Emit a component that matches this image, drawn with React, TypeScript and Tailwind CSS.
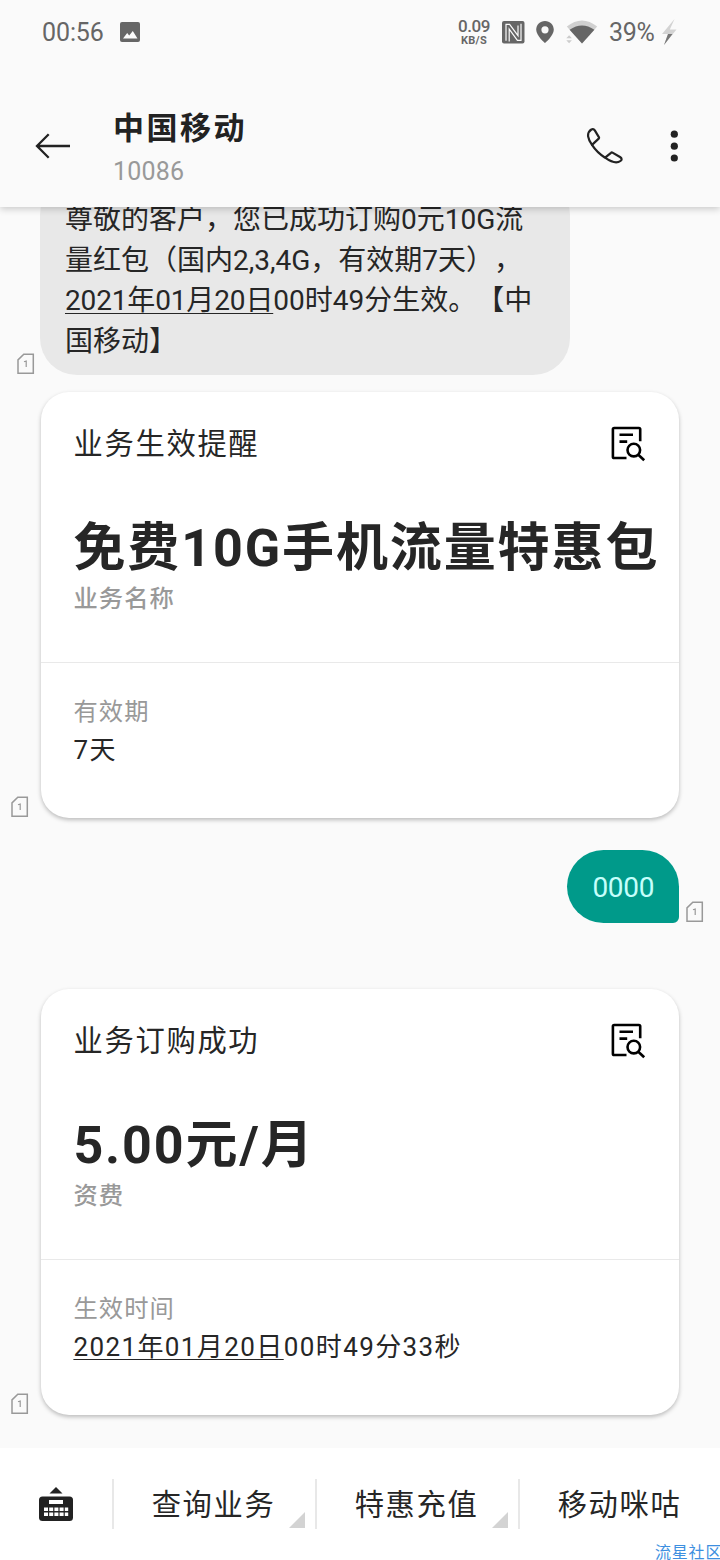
import type { ReactNode } from "react";

function SimIcon() {
  return (
    <svg width="18" height="22" viewBox="0 0 18 22" className="shrink-0" fill="none">
      <path d="M6.8 1.2H16.3V20.2H1V6.9Z" stroke="#999" strokeWidth="1.5" />
      <path d="M7 8.8L9.2 8V14" stroke="#999" strokeWidth="1.2" />
    </svg>
  );
}

function DetailIcon() {
  return (
    <svg width="36" height="36" viewBox="0 0 36 36" fill="none" stroke="#000" strokeWidth="2.6" className="shrink-0">
      <path d="M30.2 15.2V3.3Q30.2 2 28.9 2H4.2Q2.9 2 2.9 3.3V30.7Q2.9 32 4.2 32H16.5" />
      <path d="M9.5 8.8H23M9.5 15.6H17.2" />
      <circle cx="23.8" cy="24.1" r="6.3" />
      <path d="M28.3 28.7L34.2 34.3" />
    </svg>
  );
}

function StatusBar() {
  return (
    <div className="flex h-16 items-center pl-[42px] pr-[43px] text-[#666]">
      <span className="w-[78px] pt-px text-[25px] leading-8 tracking-[-0.1px]">00:56</span>
      <svg width="20" height="20" viewBox="0 0 20 20">
        <rect width="20" height="20" rx="2" fill="#666" />
        <path d="M3 16.5L7.2 11L9.2 13.5L12.8 9L17.5 16.5Z" fill="#fafafa" />
      </svg>
      <div className="ml-auto flex w-[32px] flex-col items-center pb-px">
        <span className="text-[17px] font-medium leading-[17px] tracking-[-0.4px]">0.09</span>
        <span className="text-[11px] font-bold leading-[11px] tracking-[0.3px]">KB/S</span>
      </div>
      <svg width="23" height="23" viewBox="0 0 23 23" className="ml-[12px]">
        <rect width="22.5" height="22.5" rx="2" fill="#666" />
        <path d="M4 19.8V3.4L7.6 3.4L16 14.6V4.4" fill="none" stroke="#fafafa" strokeWidth="1.2" />
        <path d="M19 2.8V19.4L15.4 19.4L7.2 8.2V20.4" fill="none" stroke="#fafafa" strokeWidth="1.2" />
      </svg>
      <svg width="18" height="22" viewBox="0 0 18 22" className="ml-[11px]">
        <path fillRule="evenodd" d="M9 0C4 0 .2 3.9.2 8.7C.2 14.7 9 22 9 22S17.8 14.7 17.8 8.7C17.8 3.9 14 0 9 0ZM9 5.2a3.6 3.6 0 1 1 0 7.2a3.6 3.6 0 0 1 0-7.2Z" fill="#666" />
      </svg>
      <svg width="32" height="24" viewBox="0 0 32 24" className="ml-[12px]">
        <path d="M.8 6.5Q16 -5.5 31.2 6.5L16 23.5Z" fill="#d0d0d0" />
        <path d="M3.6 9.8Q16 1 28.4 9.8L16 23.5Z" fill="#666" />
        <path d="M0 14L7 14L7 24H0Z" fill="#fafafa" />
        <path d="M.3 18.2L3.1 15.2L5.9 18.2ZM.3 20.2H5.9L3.1 23.2Z" fill="#ccc" />
      </svg>
      <span className="ml-[11px] w-[46px] pt-px text-[25px] leading-8 tracking-[-0.3px]">39%</span>
      <svg width="16" height="26" viewBox="0 0 16 26" className="ml-[6px]">
        <path d="M13.5 0L1 15H7L3 26L15.5 10.5H8.8Z" fill="#d3d3d3" />
        <path d="M1 15H11.5L3 26L7 15Z" fill="#777" />
      </svg>
    </div>
  );
}

function Header() {
  return (
    <header className="relative z-10 h-[207px] shrink-0 bg-[#fafafa] shadow-[0_2px_7px_rgba(0,0,0,0.2)]">
      <StatusBar />
      <div className="flex h-[143px] pl-[35px] pr-[42px] text-[#222]">
        <svg width="35" height="26" viewBox="0 0 35 26" className="mt-[69px]" fill="none" stroke="#222" strokeWidth="2.3">
          <path d="M35 13H2M13.7 1.3L2 13L13.7 24.7" />
        </svg>
        <div className="ml-[43px] mt-[45px]">
          <h1 className="text-[31px] font-bold leading-10 tracking-[2.5px]">中国移动</h1>
          <p className="mt-[7px] text-[25px] leading-8 tracking-[0.2px] text-[#999]">10086</p>
        </div>
        <svg width="38" height="37" viewBox="0 0 38 37" className="ml-auto mr-px mt-[64px]" fill="none" stroke="#222" strokeWidth="2.2" strokeLinejoin="round">
          <path d="M6.4 1.5C7.6.9 9 1.2 9.8 2.4L14 9.4C14.2 9.9 14.1 10.2 13.7 10.6L7 16.9C3.3 11.7.7 5.1 6.4 1.5Z" />
          <path d="M7 16.9C10 21.5 15 26.5 20.1 29.7L26 24.8C26.4 24.4 27 24.3 27.5 24.6L35 29Q38 31 35.4 33C30.8 36.5 25 33.2 20.1 29.7" />
        </svg>
        <svg width="8" height="32" viewBox="0 0 8 32" className="ml-[46px] mt-[66px]" fill="#222">
          <circle cx="4.3" cy="4.2" r="3.6" />
          <circle cx="4.3" cy="16.2" r="3.6" />
          <circle cx="4.3" cy="28" r="3.6" />
        </svg>
      </div>
    </header>
  );
}

type CardProps = { title: string; headline: string; caption: string; label: string; children: ReactNode };

function Card({ title, headline, caption, label, children }: CardProps) {
  return (
    <div className="flex items-end pl-[11px]">
      <div className="mr-[12.4px]">
        <SimIcon />
      </div>
      <article className="h-[426px] w-[637.5px] rounded-[28px] bg-white shadow-[0_2px_4px_rgba(0,0,0,0.25)]">
        <div className="h-[271px] border-b border-[#e9e9e9] pl-8 text-[#262626]">
          <div className="flex items-start justify-between pr-[33px] pt-[34px]">
            <h2 className="text-[29.3px] leading-9 tracking-[1.7px]">{title}</h2>
            <DetailIcon />
          </div>
          <p className="mt-[55px] whitespace-nowrap text-[52px] font-bold leading-[64px] tracking-[1.9px]">{headline}</p>
          <p className="mt-[2px] text-[24.3px] font-medium leading-8 tracking-[1.1px] text-[#999]">{caption}</p>
        </div>
        <div className="pl-8 pt-[33px] text-[#262626]">
          <p className="text-[24.3px] leading-8 tracking-[1.1px] text-[#999]">{label}</p>
          <p className="mt-[6px] text-[26px] leading-8 tracking-[1.4px]">{children}</p>
        </div>
      </article>
    </div>
  );
}

function MenuItem({ text, arrow, divider }: { text: string; arrow?: boolean; divider?: boolean }) {
  return (
    <>
      <div className="relative flex w-[201px] shrink-0 items-center justify-center pr-[2px] pt-[4px] text-[29.3px] tracking-[1.6px]">
        {text}
        {arrow && (
          <svg width="16" height="16" viewBox="0 0 16 16" className="absolute bottom-px right-[10px]">
            <path d="M16 0V16H0Z" fill="#d3d3d3" />
          </svg>
        )}
      </div>
      {divider && <div className="w-[2px] shrink-0 bg-[#e8e8e8]" />}
    </>
  );
}

const dateClass = "underline decoration-[1px] underline-offset-[3px] [text-decoration-skip-ink:none]";

export default function App() {
  return (
    <div className="flex h-[1560px] w-[720px] flex-col overflow-hidden bg-[#fafafa] font-['Roboto','Noto_Sans_CJK_SC',sans-serif] [text-spacing-trim:space-all]" lang="zh-CN">
      <Header />
      <main className="flex min-h-0 flex-1 flex-col">
        <div className="-mt-[29px] flex items-end pl-[17px]">
          <div className="mr-[5.4px]">
            <SimIcon />
          </div>
          <div className="h-[197px] w-[530px] whitespace-nowrap rounded-[37px] bg-[#e8e8e8] pl-[24.6px] pt-[22px] text-[28px] leading-[40.5px] text-[#262626]">
            尊敬的客户，您已成功订购0元10G流
            <br />
            量红包（国内2,3,4G，有效期7天），
            <br />
            <span className={`${dateClass} tracking-[-0.15px]`}>2021年01月20日</span>00时49分生效。【中
            <br />
            国移动】
          </div>
        </div>
        <div className="mt-[17px]">
          <Card title="业务生效提醒" headline="免费10G手机流量特惠包" caption="业务名称" label="有效期">
            7天
          </Card>
        </div>
        <div className="mt-[32px] flex items-end justify-end pr-[16.5px]">
          <div className="flex h-[73px] w-[112px] items-center justify-center rounded-[37px] rounded-br-[6px] bg-[#009a8a] pt-[2px] text-[28px] tracking-[-0.3px] text-[#c5fffb]">
            0000
          </div>
          <div className="ml-[6.2px]">
            <SimIcon />
          </div>
        </div>
        <div className="mt-[65.5px]">
          <Card title="业务订购成功" headline="5.00元/月" caption="资费" label="生效时间">
            <span className={dateClass}>2021年01月20日</span>00时49分33秒
          </Card>
        </div>
      </main>
      <footer className="relative flex h-28 shrink-0 bg-white pb-[31px] pt-[31px] text-[#262626]">
        <div className="flex w-28 shrink-0 items-center justify-center">
          <svg width="34" height="34" viewBox="0 0 34 34" fill="#222">
            <path d="M17 0L23.5 6.5H10.5Z" />
            <rect y="9.5" width="34" height="24.5" rx="3.5" />
            <path d="M10 13H24V17H10ZM5 20.5h4v3.6h-4zM10.2 20.5h4v3.6h-4zM15.4 20.5h4v3.6h-4zM20.6 20.5h4v3.6h-4zM25.8 20.5h3.4v3.6h-3.4zM5 25.5h4v3.6h-4zM10.2 25.5h4v3.6h-4zM15.4 25.5h4v3.6h-4zM20.6 25.5h4v3.6h-4zM25.8 25.5h3.4v3.6h-3.4z" fill="#fff" />
          </svg>
        </div>
        <div className="w-[2px] shrink-0 bg-[#e8e8e8]" />
        <MenuItem text="查询业务" arrow divider />
        <MenuItem text="特惠充值" arrow divider />
        <MenuItem text="移动咪咕" />
        <span className="absolute bottom-[-3px] left-[655px] whitespace-nowrap text-[16px] leading-5 tracking-[0.8px] text-[#3d8fe0]">
          流星社区
        </span>
      </footer>
    </div>
  );
}
